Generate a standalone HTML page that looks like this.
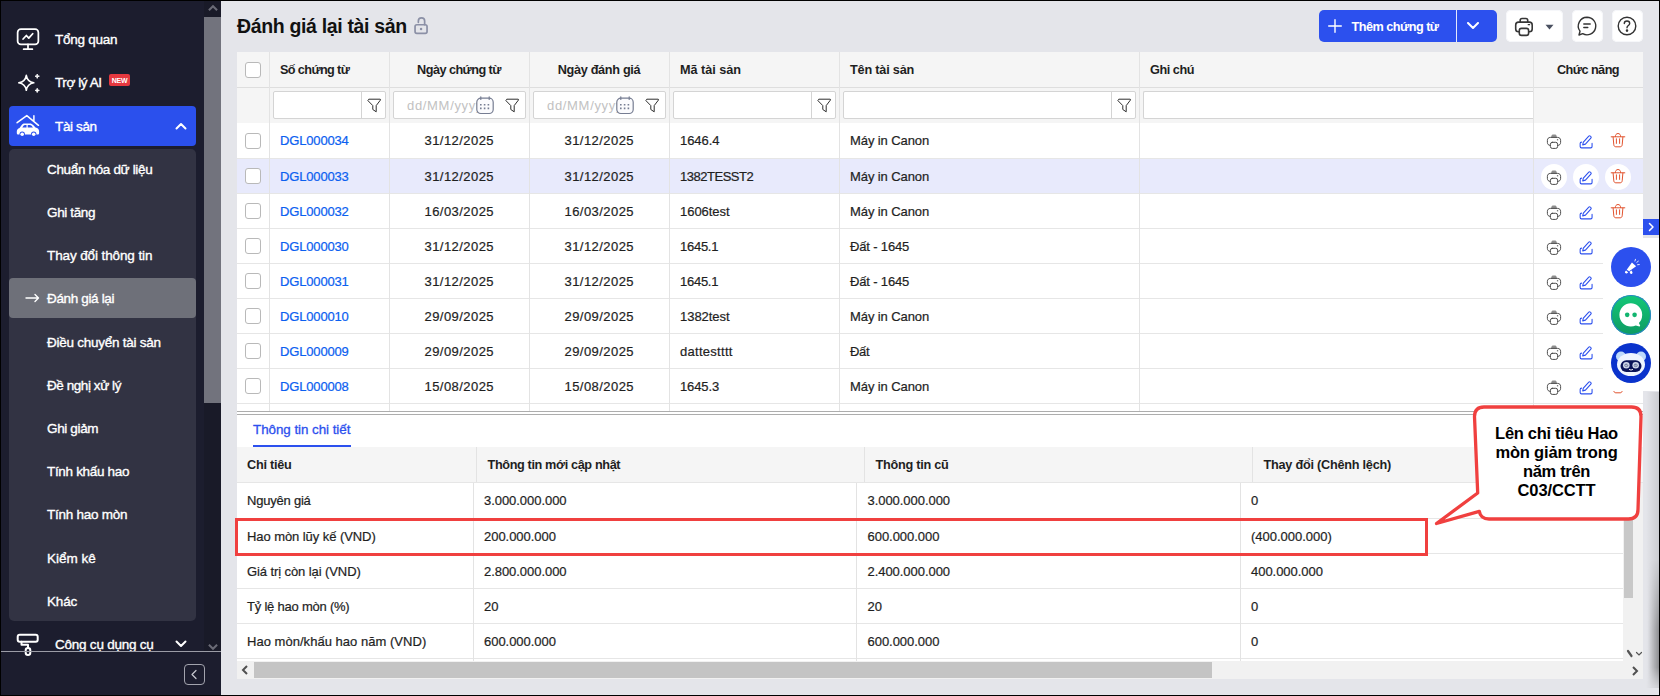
<!DOCTYPE html>
<html lang="vi">
<head>
<meta charset="utf-8">
<title>Đánh giá lại tài sản</title>
<style>
*{box-sizing:border-box;margin:0;padding:0}
html,body{width:1660px;height:696px;overflow:hidden;background:#e4e5ea}
body{font-family:"Liberation Sans",sans-serif;font-size:13px;color:#1f1f1f;position:relative}
div,span,svg,a{position:absolute}
#frame{left:0;top:0;width:1660px;height:696px;border:1px solid #000;z-index:100}
#side{left:1px;top:1px;width:220px;height:694px;background:#1c1d2e;overflow:hidden}
.mi{left:8px;width:187px;height:40px;border-radius:4px;color:#fff;font-size:13.5px}
.lbl{left:46px;top:0;line-height:41px;white-space:nowrap;-webkit-text-stroke:0.350px #fff}
#sub{left:8px;top:148px;width:187px;height:472px;background:#323343;border-radius:5px}
.si{left:0;width:187px;height:40px;color:#fff;font-size:13.5px;line-height:41px;padding-left:38px;white-space:nowrap;border-radius:4px;-webkit-text-stroke:0.350px #fff}
.si.sel{background:#6e7079}
.t{white-space:nowrap}
.btn{top:10px;height:32px;border-radius:5px;background:#fff;box-shadow:inset 0 0 0 1px #f6f7fa}
.row{left:237px;width:1406px;height:35px;border-bottom:1px solid #e6e6e6;background:#fff}
.row.hl{background:#e8eafc}
.c{top:0;height:35px;line-height:36px;white-space:nowrap;font-size:13px;-webkit-text-stroke:0.220px currentColor}
.hc{line-height:37px;font-weight:bold;font-size:12.7px;white-space:nowrap;color:#1f1f1f}
.cb{left:8px;width:16px;height:16px;border:1px solid #b9b9b9;border-radius:3px;background:#fff}
.fi{top:91px;height:28px;border:1px solid #d4d4d4;border-radius:2px;background:#fff}
.ph{left:13px;top:0;line-height:27px;color:#c2c2c2;font-size:13px;white-space:nowrap}
a.lk{color:#0b60f0;text-decoration:none;position:static}
.dc{white-space:nowrap;font-size:13px;line-height:36px;height:35px;-webkit-text-stroke:0.220px currentColor}
</style>
</head>
<body>
<div id="side">
<div class="mi" style="top:18px">
 <svg style="left:6.900px;top:8.400px" width="24" height="24" viewBox="0 0 22 22" fill="none" stroke="#fff" stroke-width="1.600" stroke-linecap="round" stroke-linejoin="round"><rect x="1.500" y="2" width="19" height="14" rx="3"/><path d="M11 16v4M7 20.300h8"/><path d="M6.500 11l3-3.200 2.200 2.400 3.600-4"/></svg>
 <span class="lbl" style="letter-spacing:-0.26px">Tổng quan</span></div>
<div class="mi" style="top:61px">
 <svg style="left:8px;top:9px" width="24" height="24" viewBox="0 0 24 24" fill="none" stroke="#fff" stroke-width="1.600" stroke-linejoin="round"><path d="M9.300 4.300C10 8.800 12.200 11 16.800 11.800 12.200 12.600 10 14.800 9.300 19.300 8.600 14.800 6.400 12.600 1.800 11.800 6.400 11 8.600 8.800 9.300 4.300z"/><path stroke-width=".8" fill="#fff" d="M20.200 3l.55 1.650 1.650.55-1.650.55-.55 1.650-.55-1.650-1.650-.55 1.650-.55zM20.200 17.200l.55 1.650 1.650.55-1.650.55-.55 1.650-.55-1.650-1.650-.55 1.650-.55z"/></svg>
 <span class="lbl" style="letter-spacing:-0.41px">Trợ lý AI</span>
 <span style="left:100px;top:12px;width:21px;height:12px;background:#e5383f;border-radius:2px;color:#fff;font-size:7px;font-weight:bold;line-height:13px;text-align:center;letter-spacing:-0.2px">NEW</span></div>
<div class="mi" style="top:105px;background:#2b50ed">
 <svg style="left:7px;top:8px" width="24" height="24" viewBox="0 0 24 24" fill="none" stroke="#fff" stroke-width="1.500" stroke-linecap="round" stroke-linejoin="round"><path d="M1.100 8.700L10.800 1.600 22.500 11.300M17.900 1.800V6.800"/><path stroke="none" fill="#fff" d="M.8 17.500C.8 15.500 2 14.500 3.500 14L5.500 11.200C6.200 10 7.200 9.400 8.500 9.400H14C15.300 9.400 16.300 10 17.200 11L19.500 13.600C21.800 14 23.100 15.300 23.100 17.500V19C23.100 20 22.500 20.500 21.500 20.500H2.400C1.400 20.500.8 20 .8 19z"/><path stroke="none" fill="#2b50ed" d="M6.300 13.500L7.700 11.500C8 11.100 8.400 10.900 8.900 10.900H10.500V13.500zM11.700 10.900H13.800C14.400 10.900 14.900 11.100 15.300 11.600L17 13.500H11.700z"/><circle cx="6.200" cy="20.200" r="2.700" fill="#2b50ed" stroke="none"/><circle cx="17.700" cy="20.200" r="2.700" fill="#2b50ed" stroke="none"/><circle cx="6.200" cy="20.300" r="1.800" fill="#fff" stroke="none"/><circle cx="17.700" cy="20.300" r="1.800" fill="#fff" stroke="none"/></svg>
 <span class="lbl" style="letter-spacing:-0.36px">Tài sản</span>
 <svg style="left:166px;top:15px" width="12" height="10" viewBox="0 0 12 10" fill="none" stroke="#fff" stroke-width="2" stroke-linecap="round" stroke-linejoin="round"><path d="M1.500 7.500L6 3l4.500 4.500"/></svg></div>
<div id="sub">
<div class="si" style="top:0px;letter-spacing:-0.34px">Chuẩn hóa dữ liệu</div>
<div class="si" style="top:43px;letter-spacing:-0.36px">Ghi tăng</div>
<div class="si" style="top:86px;letter-spacing:-0.11px">Thay đổi thông tin</div>
<div class="si sel" style="top:129px;letter-spacing:-0.35px"><svg style="left:16px;top:15px" width="15" height="10" viewBox="0 0 15 10" fill="none" stroke="#fff" stroke-width="1.400" stroke-linecap="round" stroke-linejoin="round"><path d="M1 5h12.500M10 1.500L13.500 5 10 8.500"/></svg>Đánh giá lại</div>
<div class="si" style="top:173px;letter-spacing:-0.25px">Điều chuyển tài sản</div>
<div class="si" style="top:216px;letter-spacing:-0.43px">Đề nghị xử lý</div>
<div class="si" style="top:259px;letter-spacing:-0.35px">Ghi giảm</div>
<div class="si" style="top:302px;letter-spacing:-0.32px">Tính khấu hao</div>
<div class="si" style="top:345px;letter-spacing:-0.25px">Tính hao mòn</div>
<div class="si" style="top:389px;letter-spacing:-0.01px">Kiểm kê</div>
<div class="si" style="top:432px;letter-spacing:-0.14px">Khác</div>
</div>
<div class="mi" style="top:623px">
 <span class="lbl" style="letter-spacing:-0.23px">Công cụ dụng cụ</span>
 <svg style="left:166px;top:15px" width="12" height="10" viewBox="0 0 12 10" fill="none" stroke="#fff" stroke-width="2" stroke-linecap="round" stroke-linejoin="round"><path d="M1.500 2.500L6 7l4.500-4.500"/></svg></div>
<div style="left:203px;top:0;width:17px;height:651px;background:#191a28">
 <div style="left:0;top:16px;width:17px;height:386px;background:#72737d"></div>
 <svg style="left:3.500px;top:3px" width="10" height="8" viewBox="0 0 11 8" fill="none" stroke="#6a6b76" stroke-width="2.200"><path d="M1 6.500L5.500 2 10 6.500"/></svg>
 <svg style="left:3.500px;top:642px" width="10" height="8" viewBox="0 0 11 8" fill="none" stroke="#6a6b76" stroke-width="2.200"><path d="M1 1.500L5.500 6 10 1.500"/></svg></div>
<div style="left:0;top:651px;width:220px;height:43px;background:#1c1d2e"></div>
<svg style="left:15.300px;top:631.700px" width="24" height="24" viewBox="0 0 24 24" fill="none" stroke="#fff" stroke-width="2" stroke-linecap="round" stroke-linejoin="round"><rect x="1.700" y="1.700" width="20" height="7" rx="2"/><path d="M5.500 8.700v3h6.500v3.500"/><rect x="9.700" y="15" width="4.600" height="7" rx="2.300"/></svg>
<div style="left:0;top:650px;width:220px;height:1px;background:#9b9ca6"></div>
<div style="left:182.500px;top:663px;width:21px;height:21px;border:1px solid #a2a3ad;border-radius:4px"><svg style="left:5px;top:4px" width="8" height="11" viewBox="0 0 8 11" fill="none" stroke="#c8c9d0" stroke-width="1.200" stroke-linecap="round" stroke-linejoin="round"><path d="M6 1.500L2 5.500l4 4"/></svg></div>
</div>
<div class="t" style="left:237px;top:12px;font-size:19.5px;font-weight:bold;color:#111;line-height:28px;letter-spacing:-0.34px">Đánh giá lại tài sản</div>
<svg style="left:413px;top:16px" width="16" height="19" viewBox="0 0 16 19" fill="none" stroke="#8b90a6" stroke-width="1.700" stroke-linecap="round" stroke-linejoin="round"><rect x="2.050" y="8.750" width="12" height="8.650" rx="1.800"/><path d="M5.350 6.300V5a3.150 3.150 0 0 1 6.300 0V8.700"/><circle cx="8.050" cy="13.100" r="1.250" fill="#8b90a6" stroke="none"/></svg>
<div class="btn" style="left:1319px;width:178px;background:#2c50ee;color:#fff;box-shadow:none">
 <svg style="left:9px;top:9px" width="14" height="14" viewBox="0 0 14 14" fill="none" stroke="#fff" stroke-width="1.400" stroke-linecap="round"><path d="M7 .7v12.600M.7 7h12.600"/></svg>
 <span class="t" style="left:32.500px;top:0;line-height:35px;font-weight:bold;font-size:12.7px;letter-spacing:-0.52px">Thêm chứng từ</span>
 <div style="left:137px;top:0;width:1px;height:32px;background:#e4e8fc"></div>
 <svg style="left:148px;top:12px" width="12" height="8" viewBox="0 0 12 8" fill="none" stroke="#fff" stroke-width="2" stroke-linecap="round" stroke-linejoin="round"><path d="M1 1L6 6l5-5"/></svg></div>
<div class="btn" style="left:1505.500px;width:57px">
 <svg style="left:8.500px;top:6.500px" width="20" height="20" viewBox="0 0 20 20" fill="none" stroke="#363636" stroke-width="1.600" stroke-linecap="round" stroke-linejoin="round"><path d="M6.200 5.100V3.300C6.200 2.300 7 1.500 8 1.500h3.900c1 0 1.800.8 1.800 1.800V5.100"/><path d="M5.300 14.800H4.500C2.900 14.800 1.700 13.600 1.700 12V8C1.700 6.400 2.900 5.100 4.600 5.100H15.400C17 5.100 18.200 6.400 18.200 8V12C18.200 13.600 17 14.800 15.400 14.800H14.600"/><rect x="5.300" y="11.400" width="9.300" height="7" rx="2.200" fill="#fff"/><path stroke-width="1.200" d="M14.200 7.700h1.400"/></svg>
 <svg style="left:39.500px;top:13.500px" width="9" height="6" viewBox="0 0 9 6"><path d="M.5.800h8L4.500 5.500z" fill="#4a5060"/></svg></div>
<div class="btn" style="left:1571.500px;width:31px">
 <svg style="left:4px;top:4.500px" width="22" height="22" viewBox="0 0 22 22" fill="none" stroke="#333" stroke-width="1.400" stroke-linecap="round" stroke-linejoin="round"><path d="M11 2.200a8.800 8.800 0 1 1-4.300 16.500L3 20l1-3.800A8.800 8.800 0 0 1 11 2.200z"/><path d="M7.800 9h6.400M7.800 12.500h4"/></svg></div>
<div class="btn" style="left:1611.500px;width:31px">
 <svg style="left:4.800px;top:4.500px" width="22" height="22" viewBox="0 0 22 22" fill="none" stroke="#333" stroke-width="1.400" stroke-linecap="round" stroke-linejoin="round"><circle cx="11" cy="11" r="8.800"/><path d="M8.300 8.600c0-1.500 1.200-2.600 2.700-2.600s2.700 1.100 2.700 2.500c0 1.900-2.700 2.200-2.700 4.200"/><circle cx="11" cy="15.600" r=".6" fill="#333"/></svg></div>
<div style="left:237px;top:52px;width:1406px;height:359px;background:#fff"></div>
<div style="left:237px;top:52px;width:1406px;height:71px;background:#f5f5f5"></div>
<div style="left:237px;top:87px;width:1406px;height:1px;background:#dedede"></div>
<div class="cb" style="left:245px;top:62px"></div>
<div class="hc" style="left:280px;top:52px;letter-spacing:-0.63px">Số chứng từ</div>
<div class="hc" style="left:389px;top:52px;width:140px;text-align:center;letter-spacing:-0.55px">Ngày chứng từ</div>
<div class="hc" style="left:529px;top:52px;width:140px;text-align:center;letter-spacing:-0.32px">Ngày đánh giá</div>
<div class="hc" style="left:680px;top:52px;letter-spacing:-0.04px">Mã tài sản</div>
<div class="hc" style="left:850px;top:52px;letter-spacing:-0.20px">Tên tài sản</div>
<div class="hc" style="left:1150px;top:52px;letter-spacing:-0.46px">Ghi chú</div>
<div class="hc" style="left:1533px;top:52px;width:110px;text-align:center;letter-spacing:-0.54px">Chức năng</div>
<div class="fi" style="left:273px;width:113px">
 <div style="left:87px;top:0;width:1px;height:26px;background:#d4d4d4"></div>
 <svg style="left:93px;top:6px" width="15" height="15" viewBox="0 0 15 15" fill="none" stroke="#2d2d2d" stroke-width="1" stroke-linejoin="round"><path d="M1.800 1.200H13q.9 0 .4.900L9.200 7.600v6.200L5.800 11.500V7.600L.9 2.600z"/></svg>
</div>
<div class="fi" style="left:393px;width:133px">
 <span class="ph" style="letter-spacing:0.68px">dd/MM/yyyy</span>
 <svg style="left:82px;top:4px" width="18" height="19" viewBox="0 0 18 19" fill="none" stroke="#767d92" stroke-width="1.200" stroke-linecap="round"><rect x=".8" y="2.200" width="16.400" height="15.300" rx="4" fill="#fbfbfd"/><path d="M4.800 .8v2.600M13.200 .8v2.600"/><path stroke-width="1.600" stroke-dasharray="1.600 2.200" stroke-linecap="butt" d="M4 8.800h10M4 12.400h10"/></svg>
 <svg style="left:111px;top:6px" width="15" height="15" viewBox="0 0 15 15" fill="none" stroke="#2d2d2d" stroke-width="1" stroke-linejoin="round"><path d="M1.800 1.200H13q.9 0 .4.900L9.200 7.600v6.200L5.800 11.500V7.600L.9 2.600z"/></svg>
</div>
<div class="fi" style="left:533px;width:133px">
 <span class="ph" style="letter-spacing:0.68px">dd/MM/yyyy</span>
 <svg style="left:82px;top:4px" width="18" height="19" viewBox="0 0 18 19" fill="none" stroke="#767d92" stroke-width="1.200" stroke-linecap="round"><rect x=".8" y="2.200" width="16.400" height="15.300" rx="4" fill="#fbfbfd"/><path d="M4.800 .8v2.600M13.200 .8v2.600"/><path stroke-width="1.600" stroke-dasharray="1.600 2.200" stroke-linecap="butt" d="M4 8.800h10M4 12.400h10"/></svg>
 <svg style="left:111px;top:6px" width="15" height="15" viewBox="0 0 15 15" fill="none" stroke="#2d2d2d" stroke-width="1" stroke-linejoin="round"><path d="M1.800 1.200H13q.9 0 .4.900L9.200 7.600v6.200L5.800 11.500V7.600L.9 2.600z"/></svg>
</div>
<div class="fi" style="left:673px;width:163px">
 <div style="left:137px;top:0;width:1px;height:26px;background:#d4d4d4"></div>
 <svg style="left:143px;top:6px" width="15" height="15" viewBox="0 0 15 15" fill="none" stroke="#2d2d2d" stroke-width="1" stroke-linejoin="round"><path d="M1.800 1.200H13q.9 0 .4.900L9.200 7.600v6.200L5.800 11.500V7.600L.9 2.600z"/></svg>
</div>
<div class="fi" style="left:843px;width:293px">
 <div style="left:267px;top:0;width:1px;height:26px;background:#d4d4d4"></div>
 <svg style="left:273px;top:6px" width="15" height="15" viewBox="0 0 15 15" fill="none" stroke="#2d2d2d" stroke-width="1" stroke-linejoin="round"><path d="M1.800 1.200H13q.9 0 .4.900L9.200 7.600v6.200L5.800 11.500V7.600L.9 2.600z"/></svg>
</div>
<div class="fi" style="left:1143px;width:391px;border-right:none;border-radius:2px 0 0 2px"></div>
<div class="row" style="top:123px;height:36px">
 <div class="cb" style="top:10px"></div>
 <div class="c" style="left:43px;letter-spacing:-0.16px"><a class="lk">DGL000034</a></div>
 <div class="c" style="left:152px;width:140px;text-align:center;letter-spacing:0.44px;text-indent:0.5px">31/12/2025</div>
 <div class="c" style="left:292px;width:140px;text-align:center;letter-spacing:0.44px;text-indent:0.5px">31/12/2025</div>
 <div class="c" style="left:443px;letter-spacing:-0.07px">1646.4</div>
 <div class="c" style="left:613px;letter-spacing:-0.09px">Máy in Canon</div>
 <svg style="left:1309px;top:10.5px" width="16" height="16" viewBox="0 0 16 16" fill="none" stroke="#4a4a4a" stroke-width="1" stroke-linecap="round" stroke-linejoin="round"><path d="M5 3.200L5.600 1.400Q5.900.6 6.800.6H9.200Q10.100.6 10.400 1.400L11 3.200z" fill="#8e8e8e" stroke="none"/><path d="M4.600 11.400H4.400C2.500 11.400 1.400 10.200 1.400 8.400V6.400C1.400 4.600 2.500 3.400 4.400 3.400H11.600C13.500 3.400 14.600 4.600 14.600 6.400V8.400C14.600 10.200 13.500 11.400 11.600 11.400H11.400"/><rect x="4.400" y="8.300" width="7.200" height="6.100" rx="1.900" fill="#fff"/><path d="M11.300 5.800h.5"/></svg><svg style="left:1341.4px;top:10.7px" width="15" height="15" viewBox="0 0 16 16" fill="none" stroke="#2c50ee" stroke-width="1.150" stroke-linecap="round" stroke-linejoin="round"><path d="M5 11.600l.7-3 5.800-6.300c.5-.5 1.200-.5 1.700 0l.5.400c.5.500.5 1.200 0 1.700L7.900 10.800z"/><path d="M3.800 8.700c-.9.100-1.500.7-1.500 1.500v3.200c0 .8.600 1.400 1.400 1.400h9.900c.8 0 1.400-.6 1.400-1.400V10"/></svg><svg style="left:1373px;top:9.2px" width="16" height="16" viewBox="0 0 16 16" fill="none" stroke="#e2532e" stroke-width="1" stroke-linecap="round" stroke-linejoin="round"><path d="M1.200 4.800h13.600"/><path d="M5.300 4.600c0-1.900 1.100-3.100 2.700-3.100s2.700 1.200 2.700 3.100"/><path d="M3.100 5l.7 7.800c.1 1.200.9 2 2.100 2h4.200c1.200 0 2-.8 2.100-2l.7-7.800"/><path d="M6.400 6.800v4.600M9.600 6.800v4.600"/></svg>
</div>
<div class="row hl" style="top:159px;height:35px">
 <div class="cb" style="top:9px"></div>
 <div class="c" style="left:43px;letter-spacing:-0.16px"><a class="lk">DGL000033</a></div>
 <div class="c" style="left:152px;width:140px;text-align:center;letter-spacing:0.44px;text-indent:0.5px">31/12/2025</div>
 <div class="c" style="left:292px;width:140px;text-align:center;letter-spacing:0.44px;text-indent:0.5px">31/12/2025</div>
 <div class="c" style="left:443px;letter-spacing:-0.48px">1382TESST2</div>
 <div class="c" style="left:613px;letter-spacing:-0.09px">Máy in Canon</div>
 <div style="left:1304px;top:5px;width:26px;height:26px;border-radius:13px;background:#fff"></div>
 <div style="left:1336px;top:5px;width:26px;height:26px;border-radius:13px;background:#fff"></div>
 <div style="left:1368px;top:5px;width:26px;height:26px;border-radius:13px;background:#fff"></div>
 <svg style="left:1309px;top:10.5px" width="16" height="16" viewBox="0 0 16 16" fill="none" stroke="#4a4a4a" stroke-width="1" stroke-linecap="round" stroke-linejoin="round"><path d="M5 3.200L5.600 1.400Q5.900.6 6.800.6H9.200Q10.100.6 10.400 1.400L11 3.200z" fill="#8e8e8e" stroke="none"/><path d="M4.600 11.400H4.400C2.500 11.400 1.400 10.200 1.400 8.400V6.400C1.400 4.600 2.500 3.400 4.400 3.400H11.600C13.500 3.400 14.600 4.600 14.600 6.400V8.400C14.600 10.200 13.500 11.400 11.600 11.400H11.400"/><rect x="4.400" y="8.300" width="7.200" height="6.100" rx="1.900" fill="#fff"/><path d="M11.300 5.800h.5"/></svg><svg style="left:1341.4px;top:10.7px" width="15" height="15" viewBox="0 0 16 16" fill="none" stroke="#2c50ee" stroke-width="1.150" stroke-linecap="round" stroke-linejoin="round"><path d="M5 11.600l.7-3 5.800-6.300c.5-.5 1.200-.5 1.700 0l.5.400c.5.500.5 1.200 0 1.700L7.900 10.800z"/><path d="M3.800 8.700c-.9.100-1.500.7-1.500 1.500v3.200c0 .8.600 1.400 1.400 1.400h9.900c.8 0 1.400-.6 1.400-1.400V10"/></svg><svg style="left:1373px;top:9.2px" width="16" height="16" viewBox="0 0 16 16" fill="none" stroke="#e2532e" stroke-width="1" stroke-linecap="round" stroke-linejoin="round"><path d="M1.200 4.800h13.600"/><path d="M5.300 4.600c0-1.900 1.100-3.100 2.700-3.100s2.700 1.200 2.700 3.100"/><path d="M3.100 5l.7 7.800c.1 1.200.9 2 2.100 2h4.200c1.200 0 2-.8 2.100-2l.7-7.800"/><path d="M6.400 6.800v4.600M9.600 6.800v4.600"/></svg>
</div>
<div class="row" style="top:194px;height:35px">
 <div class="cb" style="top:9px"></div>
 <div class="c" style="left:43px;letter-spacing:-0.16px"><a class="lk">DGL000032</a></div>
 <div class="c" style="left:152px;width:140px;text-align:center;letter-spacing:0.44px;text-indent:0.5px">16/03/2025</div>
 <div class="c" style="left:292px;width:140px;text-align:center;letter-spacing:0.44px;text-indent:0.5px">16/03/2025</div>
 <div class="c" style="left:443px;letter-spacing:-0.04px">1606test</div>
 <div class="c" style="left:613px;letter-spacing:-0.09px">Máy in Canon</div>
 <svg style="left:1309px;top:10.5px" width="16" height="16" viewBox="0 0 16 16" fill="none" stroke="#4a4a4a" stroke-width="1" stroke-linecap="round" stroke-linejoin="round"><path d="M5 3.200L5.600 1.400Q5.900.6 6.800.6H9.200Q10.100.6 10.400 1.400L11 3.200z" fill="#8e8e8e" stroke="none"/><path d="M4.600 11.400H4.400C2.500 11.400 1.400 10.200 1.400 8.400V6.400C1.400 4.600 2.500 3.400 4.400 3.400H11.600C13.500 3.400 14.600 4.600 14.600 6.400V8.400C14.600 10.200 13.500 11.400 11.600 11.400H11.400"/><rect x="4.400" y="8.300" width="7.200" height="6.100" rx="1.900" fill="#fff"/><path d="M11.300 5.800h.5"/></svg><svg style="left:1341.4px;top:10.7px" width="15" height="15" viewBox="0 0 16 16" fill="none" stroke="#2c50ee" stroke-width="1.150" stroke-linecap="round" stroke-linejoin="round"><path d="M5 11.600l.7-3 5.800-6.300c.5-.5 1.200-.5 1.700 0l.5.400c.5.500.5 1.200 0 1.700L7.900 10.800z"/><path d="M3.800 8.700c-.9.100-1.500.7-1.500 1.500v3.200c0 .8.600 1.400 1.400 1.400h9.900c.8 0 1.400-.6 1.400-1.400V10"/></svg><svg style="left:1373px;top:9.2px" width="16" height="16" viewBox="0 0 16 16" fill="none" stroke="#e2532e" stroke-width="1" stroke-linecap="round" stroke-linejoin="round"><path d="M1.200 4.800h13.600"/><path d="M5.300 4.600c0-1.900 1.100-3.100 2.700-3.100s2.700 1.200 2.700 3.100"/><path d="M3.100 5l.7 7.800c.1 1.200.9 2 2.100 2h4.200c1.200 0 2-.8 2.100-2l.7-7.800"/><path d="M6.400 6.800v4.600M9.600 6.800v4.600"/></svg>
</div>
<div class="row" style="top:229px;height:35px">
 <div class="cb" style="top:9px"></div>
 <div class="c" style="left:43px;letter-spacing:-0.16px"><a class="lk">DGL000030</a></div>
 <div class="c" style="left:152px;width:140px;text-align:center;letter-spacing:0.44px;text-indent:0.5px">31/12/2025</div>
 <div class="c" style="left:292px;width:140px;text-align:center;letter-spacing:0.44px;text-indent:0.5px">31/12/2025</div>
 <div class="c" style="left:443px;letter-spacing:-0.27px">1645.1</div>
 <div class="c" style="left:613px;letter-spacing:-0.16px">Đất - 1645</div>
 <svg style="left:1309px;top:10.5px" width="16" height="16" viewBox="0 0 16 16" fill="none" stroke="#4a4a4a" stroke-width="1" stroke-linecap="round" stroke-linejoin="round"><path d="M5 3.200L5.600 1.400Q5.900.6 6.800.6H9.200Q10.100.6 10.400 1.400L11 3.200z" fill="#8e8e8e" stroke="none"/><path d="M4.600 11.400H4.400C2.500 11.400 1.400 10.200 1.400 8.400V6.400C1.400 4.600 2.500 3.400 4.400 3.400H11.600C13.500 3.400 14.600 4.600 14.600 6.400V8.400C14.600 10.200 13.500 11.400 11.600 11.400H11.400"/><rect x="4.400" y="8.300" width="7.200" height="6.100" rx="1.900" fill="#fff"/><path d="M11.300 5.800h.5"/></svg><svg style="left:1341.4px;top:10.7px" width="15" height="15" viewBox="0 0 16 16" fill="none" stroke="#2c50ee" stroke-width="1.150" stroke-linecap="round" stroke-linejoin="round"><path d="M5 11.600l.7-3 5.800-6.300c.5-.5 1.200-.5 1.700 0l.5.400c.5.500.5 1.200 0 1.700L7.900 10.800z"/><path d="M3.800 8.700c-.9.100-1.500.7-1.500 1.500v3.200c0 .8.600 1.400 1.400 1.400h9.900c.8 0 1.400-.6 1.400-1.400V10"/></svg><svg style="left:1373px;top:9.2px" width="16" height="16" viewBox="0 0 16 16" fill="none" stroke="#e2532e" stroke-width="1" stroke-linecap="round" stroke-linejoin="round"><path d="M1.200 4.800h13.600"/><path d="M5.300 4.600c0-1.900 1.100-3.100 2.700-3.100s2.700 1.200 2.700 3.100"/><path d="M3.100 5l.7 7.800c.1 1.200.9 2 2.100 2h4.200c1.200 0 2-.8 2.100-2l.7-7.800"/><path d="M6.400 6.800v4.600M9.600 6.800v4.600"/></svg>
</div>
<div class="row" style="top:264px;height:35px">
 <div class="cb" style="top:9px"></div>
 <div class="c" style="left:43px;letter-spacing:-0.16px"><a class="lk">DGL000031</a></div>
 <div class="c" style="left:152px;width:140px;text-align:center;letter-spacing:0.44px;text-indent:0.5px">31/12/2025</div>
 <div class="c" style="left:292px;width:140px;text-align:center;letter-spacing:0.44px;text-indent:0.5px">31/12/2025</div>
 <div class="c" style="left:443px;letter-spacing:-0.27px">1645.1</div>
 <div class="c" style="left:613px;letter-spacing:-0.16px">Đất - 1645</div>
 <svg style="left:1309px;top:10.5px" width="16" height="16" viewBox="0 0 16 16" fill="none" stroke="#4a4a4a" stroke-width="1" stroke-linecap="round" stroke-linejoin="round"><path d="M5 3.200L5.600 1.400Q5.900.6 6.800.6H9.200Q10.100.6 10.400 1.400L11 3.200z" fill="#8e8e8e" stroke="none"/><path d="M4.600 11.400H4.400C2.500 11.400 1.400 10.200 1.400 8.400V6.400C1.400 4.600 2.500 3.400 4.400 3.400H11.600C13.500 3.400 14.600 4.600 14.600 6.400V8.400C14.600 10.200 13.500 11.400 11.600 11.400H11.400"/><rect x="4.400" y="8.300" width="7.200" height="6.100" rx="1.900" fill="#fff"/><path d="M11.300 5.800h.5"/></svg><svg style="left:1341.4px;top:10.7px" width="15" height="15" viewBox="0 0 16 16" fill="none" stroke="#2c50ee" stroke-width="1.150" stroke-linecap="round" stroke-linejoin="round"><path d="M5 11.600l.7-3 5.800-6.300c.5-.5 1.200-.5 1.700 0l.5.400c.5.500.5 1.200 0 1.700L7.900 10.800z"/><path d="M3.800 8.700c-.9.100-1.500.7-1.500 1.500v3.200c0 .8.600 1.400 1.400 1.400h9.900c.8 0 1.400-.6 1.400-1.400V10"/></svg><svg style="left:1373px;top:9.2px" width="16" height="16" viewBox="0 0 16 16" fill="none" stroke="#e2532e" stroke-width="1" stroke-linecap="round" stroke-linejoin="round"><path d="M1.200 4.800h13.600"/><path d="M5.300 4.600c0-1.900 1.100-3.100 2.700-3.100s2.700 1.200 2.700 3.100"/><path d="M3.100 5l.7 7.800c.1 1.200.9 2 2.100 2h4.200c1.200 0 2-.8 2.100-2l.7-7.800"/><path d="M6.400 6.800v4.600M9.600 6.800v4.600"/></svg>
</div>
<div class="row" style="top:299px;height:35px">
 <div class="cb" style="top:9px"></div>
 <div class="c" style="left:43px;letter-spacing:-0.16px"><a class="lk">DGL000010</a></div>
 <div class="c" style="left:152px;width:140px;text-align:center;letter-spacing:0.44px;text-indent:0.5px">29/09/2025</div>
 <div class="c" style="left:292px;width:140px;text-align:center;letter-spacing:0.44px;text-indent:0.5px">29/09/2025</div>
 <div class="c" style="left:443px;letter-spacing:-0.04px">1382test</div>
 <div class="c" style="left:613px;letter-spacing:-0.09px">Máy in Canon</div>
 <svg style="left:1309px;top:10.5px" width="16" height="16" viewBox="0 0 16 16" fill="none" stroke="#4a4a4a" stroke-width="1" stroke-linecap="round" stroke-linejoin="round"><path d="M5 3.200L5.600 1.400Q5.900.6 6.800.6H9.200Q10.100.6 10.400 1.400L11 3.200z" fill="#8e8e8e" stroke="none"/><path d="M4.600 11.400H4.400C2.500 11.400 1.400 10.200 1.400 8.400V6.400C1.400 4.600 2.500 3.400 4.400 3.400H11.600C13.500 3.400 14.600 4.600 14.600 6.400V8.400C14.600 10.200 13.500 11.400 11.600 11.400H11.400"/><rect x="4.400" y="8.300" width="7.200" height="6.100" rx="1.900" fill="#fff"/><path d="M11.300 5.800h.5"/></svg><svg style="left:1341.4px;top:10.7px" width="15" height="15" viewBox="0 0 16 16" fill="none" stroke="#2c50ee" stroke-width="1.150" stroke-linecap="round" stroke-linejoin="round"><path d="M5 11.600l.7-3 5.800-6.300c.5-.5 1.200-.5 1.700 0l.5.400c.5.500.5 1.200 0 1.700L7.900 10.800z"/><path d="M3.800 8.700c-.9.100-1.500.7-1.500 1.500v3.200c0 .8.600 1.400 1.400 1.400h9.900c.8 0 1.400-.6 1.400-1.400V10"/></svg><svg style="left:1373px;top:9.2px" width="16" height="16" viewBox="0 0 16 16" fill="none" stroke="#e2532e" stroke-width="1" stroke-linecap="round" stroke-linejoin="round"><path d="M1.200 4.800h13.600"/><path d="M5.300 4.600c0-1.900 1.100-3.100 2.700-3.100s2.700 1.200 2.700 3.100"/><path d="M3.100 5l.7 7.800c.1 1.200.9 2 2.100 2h4.200c1.200 0 2-.8 2.100-2l.7-7.800"/><path d="M6.400 6.800v4.600M9.600 6.800v4.600"/></svg>
</div>
<div class="row" style="top:334px;height:35px">
 <div class="cb" style="top:9px"></div>
 <div class="c" style="left:43px;letter-spacing:-0.16px"><a class="lk">DGL000009</a></div>
 <div class="c" style="left:152px;width:140px;text-align:center;letter-spacing:0.44px;text-indent:0.5px">29/09/2025</div>
 <div class="c" style="left:292px;width:140px;text-align:center;letter-spacing:0.44px;text-indent:0.5px">29/09/2025</div>
 <div class="c" style="left:443px;letter-spacing:0.28px">dattestttt</div>
 <div class="c" style="left:613px;letter-spacing:-0.31px">Đất</div>
 <svg style="left:1309px;top:10.5px" width="16" height="16" viewBox="0 0 16 16" fill="none" stroke="#4a4a4a" stroke-width="1" stroke-linecap="round" stroke-linejoin="round"><path d="M5 3.200L5.600 1.400Q5.900.6 6.800.6H9.200Q10.100.6 10.400 1.400L11 3.200z" fill="#8e8e8e" stroke="none"/><path d="M4.600 11.400H4.400C2.500 11.400 1.400 10.200 1.400 8.400V6.400C1.400 4.600 2.500 3.400 4.400 3.400H11.600C13.500 3.400 14.600 4.600 14.600 6.400V8.400C14.600 10.200 13.500 11.400 11.600 11.400H11.400"/><rect x="4.400" y="8.300" width="7.200" height="6.100" rx="1.900" fill="#fff"/><path d="M11.300 5.800h.5"/></svg><svg style="left:1341.4px;top:10.7px" width="15" height="15" viewBox="0 0 16 16" fill="none" stroke="#2c50ee" stroke-width="1.150" stroke-linecap="round" stroke-linejoin="round"><path d="M5 11.600l.7-3 5.800-6.300c.5-.5 1.200-.5 1.700 0l.5.400c.5.500.5 1.200 0 1.700L7.900 10.800z"/><path d="M3.800 8.700c-.9.100-1.500.7-1.500 1.500v3.200c0 .8.600 1.400 1.400 1.400h9.900c.8 0 1.400-.6 1.400-1.400V10"/></svg><svg style="left:1373px;top:9.2px" width="16" height="16" viewBox="0 0 16 16" fill="none" stroke="#e2532e" stroke-width="1" stroke-linecap="round" stroke-linejoin="round"><path d="M1.200 4.800h13.600"/><path d="M5.300 4.600c0-1.900 1.100-3.100 2.700-3.100s2.700 1.200 2.700 3.100"/><path d="M3.100 5l.7 7.800c.1 1.200.9 2 2.100 2h4.200c1.200 0 2-.8 2.100-2l.7-7.800"/><path d="M6.400 6.800v4.600M9.600 6.800v4.600"/></svg>
</div>
<div class="row" style="top:369px;height:35px">
 <div class="cb" style="top:9px"></div>
 <div class="c" style="left:43px;letter-spacing:-0.16px"><a class="lk">DGL000008</a></div>
 <div class="c" style="left:152px;width:140px;text-align:center;letter-spacing:0.44px;text-indent:0.5px">15/08/2025</div>
 <div class="c" style="left:292px;width:140px;text-align:center;letter-spacing:0.44px;text-indent:0.5px">15/08/2025</div>
 <div class="c" style="left:443px;letter-spacing:-0.11px">1645.3</div>
 <div class="c" style="left:613px;letter-spacing:-0.09px">Máy in Canon</div>
 <svg style="left:1309px;top:10.5px" width="16" height="16" viewBox="0 0 16 16" fill="none" stroke="#4a4a4a" stroke-width="1" stroke-linecap="round" stroke-linejoin="round"><path d="M5 3.200L5.600 1.400Q5.900.6 6.800.6H9.200Q10.100.6 10.400 1.400L11 3.200z" fill="#8e8e8e" stroke="none"/><path d="M4.600 11.400H4.400C2.500 11.400 1.400 10.200 1.400 8.400V6.400C1.400 4.600 2.500 3.400 4.400 3.400H11.600C13.500 3.400 14.600 4.600 14.600 6.400V8.400C14.600 10.200 13.500 11.400 11.600 11.400H11.400"/><rect x="4.400" y="8.300" width="7.200" height="6.100" rx="1.900" fill="#fff"/><path d="M11.300 5.800h.5"/></svg><svg style="left:1341.4px;top:10.7px" width="15" height="15" viewBox="0 0 16 16" fill="none" stroke="#2c50ee" stroke-width="1.150" stroke-linecap="round" stroke-linejoin="round"><path d="M5 11.600l.7-3 5.800-6.300c.5-.5 1.200-.5 1.700 0l.5.400c.5.500.5 1.200 0 1.700L7.900 10.800z"/><path d="M3.800 8.700c-.9.100-1.500.7-1.500 1.500v3.200c0 .8.600 1.400 1.400 1.400h9.900c.8 0 1.400-.6 1.400-1.400V10"/></svg><svg style="left:1373px;top:9.2px" width="16" height="16" viewBox="0 0 16 16" fill="none" stroke="#e2532e" stroke-width="1" stroke-linecap="round" stroke-linejoin="round"><path d="M1.200 4.800h13.600"/><path d="M5.300 4.600c0-1.900 1.100-3.100 2.700-3.100s2.700 1.200 2.700 3.100"/><path d="M3.100 5l.7 7.800c.1 1.200.9 2 2.100 2h4.200c1.200 0 2-.8 2.100-2l.7-7.800"/><path d="M6.400 6.800v4.600M9.600 6.800v4.600"/></svg>
</div>
<div class="row" style="top:404px;height:35px">
 <div class="cb" style="top:9px"></div>
 <svg style="left:1309px;top:10.5px" width="16" height="16" viewBox="0 0 16 16" fill="none" stroke="#4a4a4a" stroke-width="1" stroke-linecap="round" stroke-linejoin="round"><path d="M5 3.200L5.600 1.400Q5.900.6 6.800.6H9.200Q10.100.6 10.400 1.400L11 3.200z" fill="#8e8e8e" stroke="none"/><path d="M4.600 11.400H4.400C2.500 11.400 1.400 10.200 1.400 8.400V6.400C1.400 4.600 2.500 3.400 4.400 3.400H11.600C13.500 3.400 14.600 4.600 14.600 6.400V8.400C14.600 10.200 13.500 11.400 11.600 11.400H11.400"/><rect x="4.400" y="8.300" width="7.200" height="6.100" rx="1.900" fill="#fff"/><path d="M11.300 5.800h.5"/></svg><svg style="left:1341.4px;top:10.7px" width="15" height="15" viewBox="0 0 16 16" fill="none" stroke="#2c50ee" stroke-width="1.150" stroke-linecap="round" stroke-linejoin="round"><path d="M5 11.600l.7-3 5.800-6.300c.5-.5 1.200-.5 1.700 0l.5.400c.5.500.5 1.200 0 1.700L7.900 10.800z"/><path d="M3.800 8.700c-.9.100-1.500.7-1.500 1.500v3.200c0 .8.600 1.400 1.400 1.400h9.900c.8 0 1.400-.6 1.400-1.400V10"/></svg><svg style="left:1373px;top:9.2px" width="16" height="16" viewBox="0 0 16 16" fill="none" stroke="#e2532e" stroke-width="1" stroke-linecap="round" stroke-linejoin="round"><path d="M1.200 4.800h13.600"/><path d="M5.300 4.600c0-1.900 1.100-3.100 2.700-3.100s2.700 1.200 2.700 3.100"/><path d="M3.100 5l.7 7.800c.1 1.200.9 2 2.100 2h4.200c1.200 0 2-.8 2.100-2l.7-7.800"/><path d="M6.400 6.800v4.600M9.600 6.800v4.600"/></svg>
</div>
<div style="left:269px;top:52px;width:1px;height:359px;background:#e3e3e3"></div>
<div style="left:389px;top:52px;width:1px;height:359px;background:#e3e3e3"></div>
<div style="left:529px;top:52px;width:1px;height:359px;background:#e3e3e3"></div>
<div style="left:669px;top:52px;width:1px;height:359px;background:#e3e3e3"></div>
<div style="left:839px;top:52px;width:1px;height:359px;background:#e3e3e3"></div>
<div style="left:1139px;top:52px;width:1px;height:359px;background:#e3e3e3"></div>
<div style="left:1533px;top:52px;width:1px;height:359px;background:#e3e3e3"></div>
<div style="left:237px;top:411px;width:1406px;height:268px;background:#fff"></div>
<div style="left:237px;top:411px;width:1406px;height:1px;background:#adadad"></div>
<div style="left:237px;top:414px;width:1406px;height:1px;background:#adadad"></div>
<div class="t" style="left:253px;top:417px;line-height:25px;font-size:13.4px;color:#2c50ee;-webkit-text-stroke:0.300px #2c50ee;letter-spacing:-0.05px">Thông tin chi tiết</div>
<div style="left:253px;top:445px;width:98px;height:2px;background:#2c50ee"></div>
<div style="left:237px;top:447px;width:1406px;height:35px;background:#f5f5f5"></div>
<div style="left:237px;top:482px;width:1406px;height:1px;background:#e6e6e6"></div>
<div class="hc" style="left:247px;top:447px;line-height:37px;letter-spacing:-0.25px">Chỉ tiêu</div>
<div class="hc" style="left:487.5px;top:447px;line-height:37px;letter-spacing:-0.37px">Thông tin mới cập nhật</div>
<div class="hc" style="left:875.5px;top:447px;line-height:37px;letter-spacing:-0.26px">Thông tin cũ</div>
<div class="hc" style="left:1263.5px;top:447px;line-height:37px;letter-spacing:-0.24px">Thay đổi (Chênh lệch)</div>
<div style="left:476px;top:447px;width:1px;height:35px;background:#e3e3e3"></div>
<div style="left:864px;top:447px;width:1px;height:35px;background:#e3e3e3"></div>
<div style="left:1252px;top:447px;width:1px;height:35px;background:#e3e3e3"></div>
<div style="left:237px;top:518px;width:1386px;height:1px;background:#e6e6e6"></div>
<div class="dc" style="left:247px;top:483px;letter-spacing:-0.22px">Nguyên giá</div>
<div class="dc" style="left:484px;top:483px;letter-spacing:-0.05px">3.000.000.000</div>
<div class="dc" style="left:867.5px;top:483px;letter-spacing:-0.05px">3.000.000.000</div>
<div class="dc" style="left:1251px;top:483px;letter-spacing:0.00px">0</div>
<div style="left:237px;top:553px;width:1386px;height:1px;background:#e6e6e6"></div>
<div class="dc" style="left:247px;top:519px;letter-spacing:-0.07px">Hao mòn lũy kế (VND)</div>
<div class="dc" style="left:484px;top:519px;letter-spacing:-0.04px">200.000.000</div>
<div class="dc" style="left:867.5px;top:519px;letter-spacing:-0.04px">600.000.000</div>
<div class="dc" style="left:1251px;top:519px;letter-spacing:-0.01px">(400.000.000)</div>
<div style="left:237px;top:588px;width:1386px;height:1px;background:#e6e6e6"></div>
<div class="dc" style="left:247px;top:554px;letter-spacing:-0.09px">Giá trị còn lại (VND)</div>
<div class="dc" style="left:484px;top:554px;letter-spacing:-0.05px">2.800.000.000</div>
<div class="dc" style="left:867.5px;top:554px;letter-spacing:-0.05px">2.400.000.000</div>
<div class="dc" style="left:1251px;top:554px;letter-spacing:-0.04px">400.000.000</div>
<div style="left:237px;top:623px;width:1386px;height:1px;background:#e6e6e6"></div>
<div class="dc" style="left:247px;top:589px;letter-spacing:-0.22px">Tỷ lệ hao mòn (%)</div>
<div class="dc" style="left:484px;top:589px;letter-spacing:0.00px">20</div>
<div class="dc" style="left:867.5px;top:589px;letter-spacing:0.00px">20</div>
<div class="dc" style="left:1251px;top:589px;letter-spacing:0.00px">0</div>
<div style="left:237px;top:658px;width:1386px;height:1px;background:#e6e6e6"></div>
<div class="dc" style="left:247px;top:624px;letter-spacing:0.03px">Hao mòn/khấu hao năm (VND)</div>
<div class="dc" style="left:484px;top:624px;letter-spacing:-0.04px">600.000.000</div>
<div class="dc" style="left:867.5px;top:624px;letter-spacing:-0.04px">600.000.000</div>
<div class="dc" style="left:1251px;top:624px;letter-spacing:0.00px">0</div>
<div style="left:473px;top:483px;width:1px;height:178px;background:#e3e3e3"></div>
<div style="left:856px;top:483px;width:1px;height:178px;background:#e3e3e3"></div>
<div style="left:1240px;top:483px;width:1px;height:178px;background:#e3e3e3"></div>
<div style="left:1623px;top:483px;width:20px;height:178px;background:#f1f1f1"></div>
<div style="left:1624px;top:483px;width:9px;height:115px;background:#c8c8c8"></div>
<svg style="left:1626px;top:648.500px" width="18" height="10" viewBox="0 0 18 10" fill="none" stroke="#555" stroke-linecap="round"><path stroke-width="2.200" d="M2 2l3.500 5"/><path stroke-width="1.200" d="M10.500 3.500L13 6l2.500-2.500"/></svg>
<div style="left:237px;top:661px;width:1406px;height:18px;background:#f1f1f1"></div>
<div style="left:254px;top:662px;width:958px;height:16px;background:#c4c4c4"></div>
<svg style="left:241px;top:665px" width="8" height="10" viewBox="0 0 8 10" fill="none" stroke="#505050" stroke-width="2"><path d="M6 1L2 5l4 4"/></svg>
<svg style="left:1631px;top:665.500px" width="8" height="10" viewBox="0 0 8 10" fill="none" stroke="#505050" stroke-width="2"><path d="M2 1l4 4-4 4"/></svg>
<div style="left:235px;top:518px;width:1193px;height:38px;border:3px solid #f0403f"></div>
<div style="left:1643px;top:219px;width:16px;height:16px;background:#2c50ee"><svg style="left:5px;top:3px" width="7" height="10" viewBox="0 0 7 10" fill="none" stroke="#fff" stroke-width="1.500" stroke-linecap="round" stroke-linejoin="round"><path d="M1.500 1.500L5 5 1.500 8.500"/></svg></div>
<div style="left:1603px;top:238px;width:56px;height:153px;background:#fff;border-radius:8px 0 0 8px"></div>
<div style="left:1611px;top:247px;width:40px;height:40px;border-radius:20px;background:#2c50ee"><svg style="left:10.500px;top:10.500px" width="19" height="19" viewBox="0 0 22 22" fill="#fff"><path d="M5.500 13.500l6-8.200 4.800 4.200-8 5.800z"/><path d="M4.800 14.600l2.400 2.100-1.300 1c-.7.500-1.600.4-2.100-.2-.6-.6-.5-1.600.1-2.100z"/><path d="M8.800 15.800l2.400-1.400.9 2.200c.3.800-.1 1.600-.9 1.900-.7.300-1.500-.1-1.800-.8z"/><path d="M15 3.500l.6-2M17.200 5l1.700-1.300M18 7.800l2-.2" stroke="#fff" stroke-width="1" stroke-linecap="round"/></svg></div>
<div style="left:1611px;top:295px;width:40px;height:40px;border-radius:20px;background:linear-gradient(180deg,#14c878,#0e9a62);box-shadow:inset 0 0 0 1px #2a86c8"><svg style="left:0;top:0" width="40" height="40" viewBox="0 0 40 40"><path d="M19.800 8.300c3 0 5.200.9 7.400 2.700 2.200 1.900 4 4.900 4 8.800s-1.500 6.500-3.300 8.300l1.200 2.500c.2.500-.2.900-.7.800l-3.600-1c-1.600.7-3.200 1-5 1-3 0-5.600-1-7.700-2.900-2.200-2-3.700-4.900-3.700-8.700s1.500-6.600 3.700-8.600c2.100-1.900 4.700-2.900 7.700-2.900z" fill="#fff"/><ellipse cx="16.200" cy="19.800" rx="2.300" ry="2.400" fill="#12b56f"/><ellipse cx="23.600" cy="19.800" rx="2.300" ry="2.400" fill="#12b56f"/></svg></div>
<div style="left:1611px;top:343px;width:40px;height:40px;border-radius:20px;background:#0a33cc;overflow:hidden"><svg style="left:0;top:0" width="40" height="40" viewBox="0 0 40 40"><circle cx="10" cy="13.500" r="5" fill="#bcd9fb"/><circle cx="30" cy="13.500" r="5" fill="#bcd9fb"/><ellipse cx="20" cy="21.500" rx="14" ry="11.500" fill="#eef5ff"/><rect x="9.500" y="17.300" width="21" height="11.600" rx="5.800" fill="#0a1458"/><circle cx="15.300" cy="22.300" r="3.300" fill="#cfd7ea"/><circle cx="24.700" cy="22.300" r="3.300" fill="#cfd7ea"/><circle cx="15.300" cy="22.300" r="1.900" fill="#7a86a8"/><circle cx="24.700" cy="22.300" r="1.900" fill="#7a86a8"/><path d="M14.300 22.300l.8.900 1.400-1.700M23.700 22.300l.8.900 1.400-1.700" stroke="#fff" stroke-width=".6" fill="none"/><path d="M18.300 26.600q1.700 1.200 3.400 0" stroke="#fff" stroke-width=".9" fill="none" stroke-linecap="round"/></svg></div>
<svg style="left:1430px;top:400px" width="220" height="130" viewBox="0 0 220 130"><path d="M54 7H201.500Q211 7 211 16.500L208 109.500Q208 119 198.500 119H59Q50.500 119 49.300 111.300L6.500 123.500 47.700 93 44.500 16.500Q44.500 7 54 7z" fill="#fff" stroke="#f0403f" stroke-width="3.300" stroke-linejoin="round"/></svg>
<div class="t" style="left:1474px;top:424.2px;width:165px;text-align:center;font-weight:bold;font-size:16.500px;line-height:19px;color:#000;letter-spacing:-0.29px">Lên chỉ tiêu Hao</div>
<div class="t" style="left:1474px;top:443.0px;width:165px;text-align:center;font-weight:bold;font-size:16.500px;line-height:19px;color:#000;letter-spacing:-0.18px">mòn giảm trong</div>
<div class="t" style="left:1474px;top:461.8px;width:165px;text-align:center;font-weight:bold;font-size:16.500px;line-height:19px;color:#000;letter-spacing:-0.33px">năm trên</div>
<div class="t" style="left:1474px;top:480.6px;width:165px;text-align:center;font-weight:bold;font-size:16.500px;line-height:19px;color:#000;letter-spacing:-0.12px">C03/CCTT</div>
<div style="left:1646px;top:392px;width:13px;height:296px;background:linear-gradient(90deg,rgba(0,0,0,0) 0%,rgba(0,0,0,.11) 100%)"></div>
<div style="left:1648px;top:560px;width:11px;height:126px;background:linear-gradient(90deg,rgba(0,0,0,0) 0%,rgba(0,0,0,.30) 100%);-webkit-mask-image:linear-gradient(180deg,transparent 0%,#000 55%,#000 85%,transparent 100%);mask-image:linear-gradient(180deg,transparent 0%,#000 55%,#000 85%,transparent 100%)"></div>
<div id="frame"></div>
</body>
</html>
